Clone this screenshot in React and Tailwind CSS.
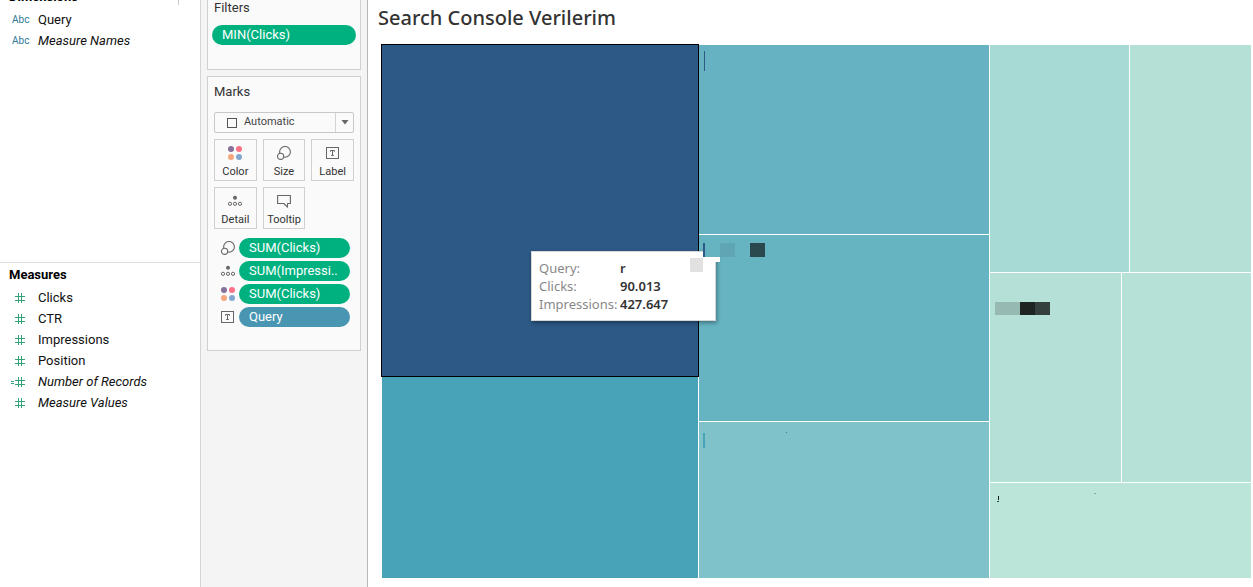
import React from 'react';

function SizeIcon() {
  return (
    <svg width="14" height="14" viewBox="0 0 14 14" fill="none" stroke="#666" strokeWidth="1.1" aria-hidden="true">
      <circle cx="8" cy="5.9" r="5.4" />
      <circle cx="3.6" cy="10.3" r="3.1" fill="#fafafa" />
    </svg>
  );
}

function DetailIcon() {
  return (
    <svg width="14" height="14" viewBox="0 0 14 14" fill="none" stroke="#666" aria-hidden="true">
      <circle cx="7" cy="3.7" r="2" fill="#666" stroke="none" />
      <circle cx="2" cy="9.8" r="1.6" />
      <circle cx="7" cy="9.8" r="1.6" />
      <circle cx="12" cy="9.8" r="1.6" />
    </svg>
  );
}

function ColorIcon() {
  return (
    <svg width="14" height="14" viewBox="0 0 14 14" aria-hidden="true">
      <circle cx="3" cy="3" r="3" fill="#86719b" />
      <circle cx="11" cy="3" r="3" fill="#fb7186" />
      <circle cx="3" cy="11" r="3" fill="#f4a77d" />
      <circle cx="11" cy="11" r="3" fill="#82a6cd" />
    </svg>
  );
}

function LabelIcon() {
  return (
    <svg width="14" height="14" viewBox="0 0 14 14" fill="none" stroke="#666" aria-hidden="true">
      <rect x="0.5" y="1.5" width="12" height="11" />
      <path d="M4.5 5.7V4.5H8.5V5.7M6.5 4.5V9.5M5.2 9.5H7.8" />
    </svg>
  );
}

function TooltipIcon() {
  return (
    <svg width="14" height="14" viewBox="0 0 14 14" fill="none" stroke="#666" strokeWidth="1.1" aria-hidden="true">
      <path d="M0.6 1.5H13.4V9.5H10.5V13.2L6.8 9.5H0.6Z" strokeLinejoin="round" />
    </svg>
  );
}

function HashIcon({ calculated }) {
  return (
    <svg width="16" height="12" viewBox="0 0 16 12" fill="none" stroke="#36a077" aria-hidden="true" className="shrink-0">
      <path d="M5 4.5H15M5 8.5H15M8.5 1V11M11.5 1V11" />
      {calculated && <path d="M1 5.5H4M1 7.5H4" />}
    </svg>
  );
}

const dimensions = [{ name: 'Query' }, { name: 'Measure Names', italic: true }];
const measures = [
  { name: 'Clicks' },
  { name: 'CTR' },
  { name: 'Impressions' },
  { name: 'Position' },
  { name: 'Number of Records', italic: true, calculated: true },
  { name: 'Measure Values', italic: true },
];
const markButtons = [
  { name: 'Color', Icon: ColorIcon },
  { name: 'Size', Icon: SizeIcon },
  { name: 'Label', Icon: LabelIcon },
  { name: 'Detail', Icon: DetailIcon },
  { name: 'Tooltip', Icon: TooltipIcon },
];
const markPills = [
  { name: 'SUM(Clicks)', Icon: SizeIcon, color: 'bg-[#00b180]' },
  { name: 'SUM(Impressi..', Icon: DetailIcon, color: 'bg-[#00b180]' },
  { name: 'SUM(Clicks)', Icon: ColorIcon, color: 'bg-[#00b180]' },
  { name: 'Query', Icon: LabelIcon, color: 'bg-[#4996b2]' },
];

function Field({ name, italic, children }) {
  return (
    <li className="flex h-[21px] items-center">
      <span className="flex w-[38px] shrink-0 items-center pl-2.5">{children}</span>
      <span className={italic ? 'italic' : ''}>{name}</span>
    </li>
  );
}

function Pill({ name, color }) {
  return (
    <button type="button" className={`h-5 w-full rounded-full px-2.5 text-left text-[13px] leading-5 text-white ${color}`}>
      {name}
    </button>
  );
}

function DataPane() {
  return (
    <aside className="flex w-[201px] shrink-0 flex-col overflow-hidden border-r border-[#d4d4d4] text-[13px] text-[#111]">
      <section className="relative h-[262px]">
        <h2 className="-mt-3 h-[21px] pl-[9px] leading-[18px] font-bold text-black">Dimensions</h2>
        <span className="absolute top-0 right-[21px] h-[5px] w-px bg-[#ccc]" />
        <ul>
          {dimensions.map((d) => (
            <Field key={d.name} {...d}>
              <span className="pl-0.5 text-[10px] leading-4 text-[#2f7896]">Abc</span>
            </Field>
          ))}
        </ul>
      </section>
      <section className="border-t border-[#e0e0e0]">
        <h2 className="h-6 pl-[9px] leading-6 font-bold text-black">Measures</h2>
        <ul>
          {measures.map((m) => (
            <Field key={m.name} {...m}>
              <HashIcon calculated={m.calculated} />
            </Field>
          ))}
        </ul>
      </section>
    </aside>
  );
}

function Shelves() {
  return (
    <aside className="flex w-[167px] shrink-0 flex-col gap-1.5 border-r border-[#b8b8b8] bg-[#f4f4f4] px-1.5 text-[#333]">
      <section className="h-[70px] border border-t-0 border-[#d0d0d0] bg-[#fafafa] px-1">
        <h2 className="mb-[9px] h-4 pl-0.5 text-[13px] leading-4">Filters</h2>
        <div className="flex">
          <Pill name="MIN(Clicks)" color="bg-[#00b180]" />
        </div>
      </section>
      <section className="h-[275px] border border-[#d0d0d0] bg-[#fafafa] px-1.5">
        <h2 className="h-[35px] pt-[7px] text-[13px] leading-4">Marks</h2>
        <label className="relative flex h-[21px] items-center rounded-xs border border-[#c8c8c8] text-[11px]">
          <span className="absolute left-3 size-2.5 border border-[#555]" />
          <select aria-label="Mark type" className="h-full w-full appearance-none bg-transparent pl-[29px] text-[#444]">
            <option>Automatic</option>
          </select>
          <span className="pointer-events-none absolute right-0 flex h-full w-[18px] items-center justify-center border-l border-[#d4d4d4]">
            <svg width="8" height="5" viewBox="0 0 8 5" aria-hidden="true"><path d="M0.5 0H7.5L4 4.5Z" fill="#666" /></svg>
          </span>
        </label>
        <div className="mt-1.5 grid grid-cols-3 gap-1.5">
          {markButtons.map(({ name, Icon }) => (
            <button key={name} type="button" className="flex h-[42px] flex-col items-center gap-1 border border-[#d0d0d0] pt-1.5 text-[11px] leading-4">
              <Icon />
              {name}
            </button>
          ))}
        </div>
        <ul className="mt-[9px] flex flex-col gap-[3px] pr-1 pl-[7px]">
          {markPills.map(({ name, Icon, color }, i) => (
            <li key={i} className="flex items-center gap-1">
              <span className="shrink-0"><Icon /></span>
              <Pill name={name} color={color} />
            </li>
          ))}
        </ul>
      </section>
    </aside>
  );
}

function HoverCard() {
  return (
    <div role="tooltip" className="absolute top-[206px] left-[149px] h-[70px] w-[185px] border border-[#d6d6d6] bg-white py-[7px] pl-[7px] font-['Noto_Sans',sans-serif] text-[13px] leading-[18px] shadow-[1px_2px_4px_rgba(0,0,0,0.35)]">
      <dl className="grid grid-cols-[81px_1fr]">
        <dt className="text-[#888]">Query:</dt>
        <dd className="font-semibold text-[#333]">r</dd>
        <dt className="text-[#888]">Clicks:</dt>
        <dd className="font-semibold text-[#333]">90.013</dd>
        <dt className="whitespace-nowrap text-[#888]">Impressions:</dt>
        <dd className="font-semibold text-[#333]">427.647</dd>
      </dl>
    </div>
  );
}

function Treemap() {
  return (
    <div className="relative grid flex-1 grid-cols-[316fr_290fr_261fr] gap-px">
      <div className="grid grid-rows-[331fr_201fr] gap-px">
        <div className="relative bg-[#2c5985] outline outline-black" />
        <div className="bg-[#48a3b9]" />
      </div>
      <div className="grid grid-rows-[189fr_186fr_156fr] gap-px">
        <div className="relative bg-[#66b2c2]">
          <span className="absolute top-1.5 left-[5px] h-5 w-px bg-[#2c5985]" />
        </div>
        <div className="bg-[#66b3c2]" />
        <div className="relative bg-[#80c2ca]">
          <span className="absolute top-[11px] left-1 h-[15px] w-0.5 bg-[#48a3b9]" />
          <span className="absolute top-[10px] left-[87px] h-px w-px bg-[#3c8085]" />
        </div>
      </div>
      <div className="grid grid-rows-[227fr_209fr_95fr] gap-px">
        <div className="grid grid-cols-[139fr_121fr] gap-px">
          <div className="bg-[#a7d9d5]" />
          <div className="bg-[#b4e0d6]" />
        </div>
        <div className="grid grid-cols-[131fr_129fr] gap-px">
          <div className="relative bg-[#b4e0d7]">
            <span className="absolute top-[29px] left-[5px] flex h-[13px]">
              <span className="w-[25px] bg-[#96b9b2]" />
              <span className="w-[15px] bg-[#1d2421]" />
              <span className="w-[15px] bg-[#34403d]" />
            </span>
          </div>
          <div className="bg-[#b5e1d6]" />
        </div>
        <div className="relative bg-[#bce5d9]">
          <span className="absolute top-[13px] left-2 h-1 w-px bg-[#17201d]" />
          <span className="absolute top-[18px] left-[7px] h-px w-0.5 bg-[#34403d]" />
          <span className="absolute top-[10px] left-[104px] h-px w-0.5 bg-[#86aaa0]" />
        </div>
      </div>
      <HoverCard />
      <span className="absolute top-[213px] left-[308px] h-3.5 w-[13px] bg-[#e1e1e1]" />
      <span className="absolute top-[198px] left-[321px] flex h-3.5">
        <span className="w-0.5 bg-[#2c5985]" />
        <span className="w-[15px] bg-[#66b3c2]" />
        <span className="w-[15px] bg-[#5fa5b3]" />
        <span className="w-[15px] bg-[#66b3c2]" />
        <span className="w-[15px] bg-[#2a494f]" />
      </span>
      <span className="absolute top-[212px] left-[321px] h-[5px] w-[17px] bg-white" />
    </div>
  );
}

export default function App() {
  return (
    <div className="flex min-h-screen bg-white font-[Roboto,sans-serif]">
      <DataPane />
      <Shelves />
      <main className="flex min-w-0 flex-1 flex-col pr-0.5 pb-[9px] pl-3.5">
        <h1 className="-ml-1 h-[45px] pt-1.5 font-['Noto_Sans',sans-serif] text-[20px] leading-6 font-medium text-[#333]">
          Search Console Verilerim
        </h1>
        <Treemap />
      </main>
    </div>
  );
}
